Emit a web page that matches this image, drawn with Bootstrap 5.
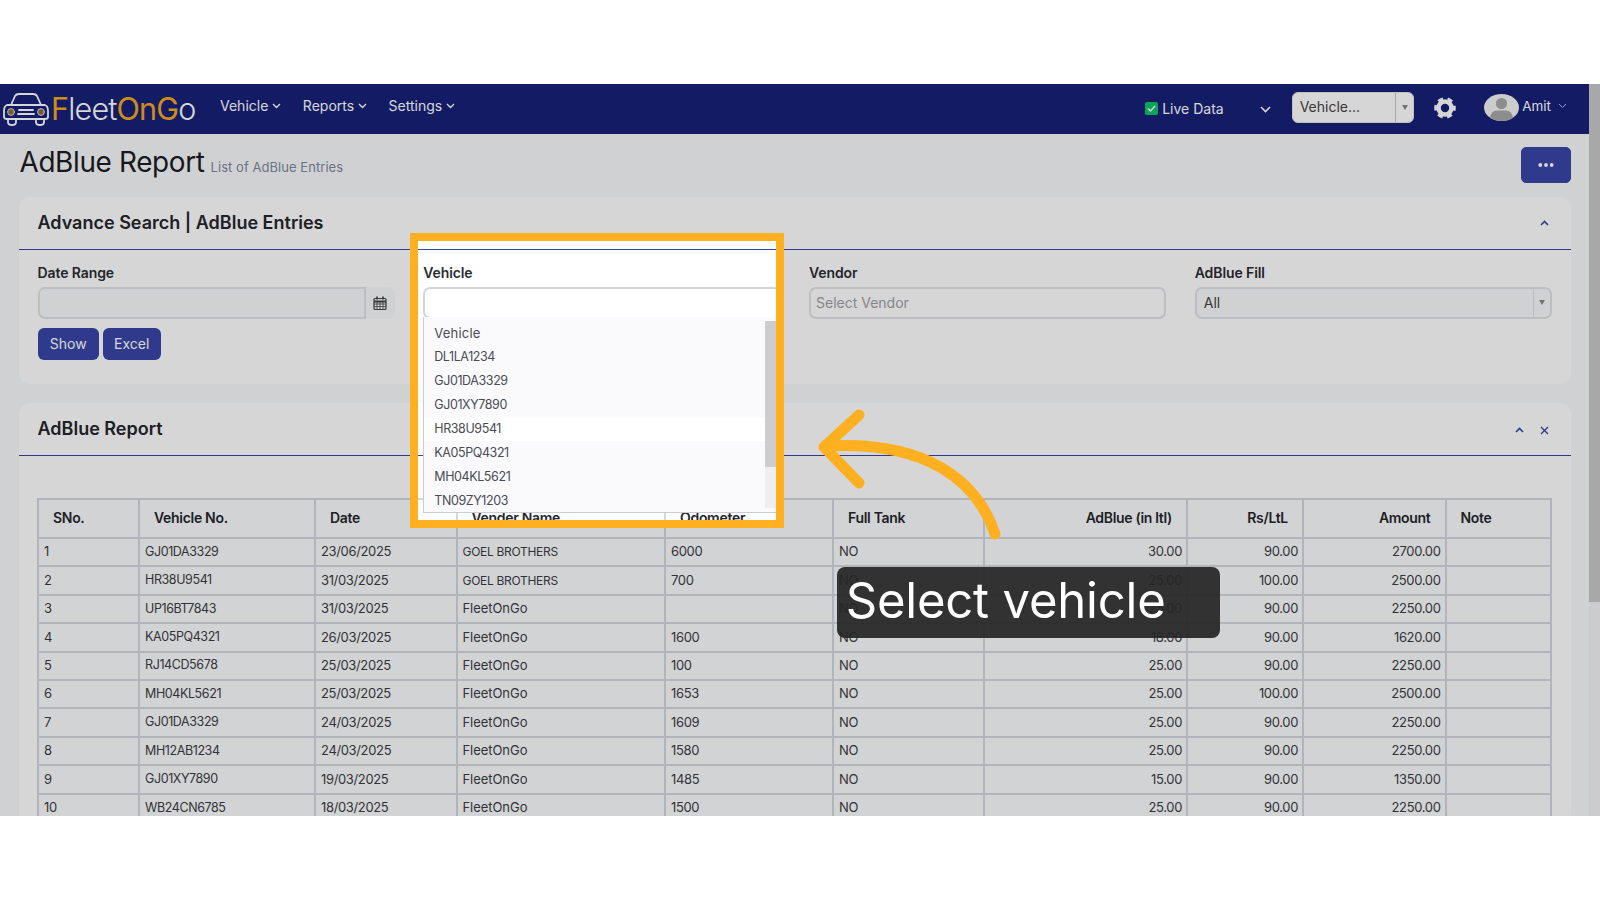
<!DOCTYPE html>
<html lang="en">
<head>
<meta charset="utf-8">
<title>AdBlue Report</title>
<link href="https://cdn.jsdelivr.net/npm/bootstrap@5.3.0/dist/css/bootstrap.min.css" rel="stylesheet">
<style>
html,body{background:#fff;overflow:hidden}
body{font-family:Inter,"Open Sans",sans-serif;color:#33343c;font-size:13px}
.gap-top{height:84px}
.stage{height:732px;overflow:hidden;position:relative;display:flex;background:#f8f9fc}
.app{width:1589px;flex:none}
.side-scroll{width:11px;flex:none;background:#f4f4f6}
.side-thumb{height:518px;background:#c9c9c9}
.top-nav{height:50px;background:#182179;color:#fff;padding:0}
.logo-wrap{margin-left:3px;width:198px;gap:2px}
.logo-text{font-size:30.5px;font-weight:300;letter-spacing:-.8px;line-height:1;color:#fff}
.logo-text b{font-weight:400;color:#f5a81c}
.menu-links{margin-left:19px;gap:21.5px;margin-bottom:7px;font-size:14px}
.menu-links span{display:inline-flex;align-items:center;gap:4px}
.live-box{margin-left:auto;font-size:14px;gap:4px;margin-bottom:1px}
.live-tick{width:13px;height:13px;background:#10c469;border-radius:2px;display:flex}
.live-chev{margin-left:36px;margin-right:21px}
.veh-pick{width:122.5px;height:31.5px;background:#fff;color:#444;border-radius:6px;font-size:14px;margin-bottom:3px;border:1px solid #e6e6e6}
.veh-pick .pick-text{flex:1;padding-left:7px;padding-bottom:3px}
.pick-arrow{width:18px;align-self:stretch;border-left:1px solid #c9c9c9;display:flex;align-items:center;justify-content:center}
.caret-down{width:0;height:0;border-left:3.5px solid transparent;border-right:3.5px solid transparent;border-top:5px solid #888}
.gear-ico{margin-left:20px;margin-bottom:3px}
.avatar-ico{margin-left:28px;margin-bottom:3px}
.user-name{margin-left:3px;font-size:13.5px;margin-bottom:6px}
.user-chev{margin-left:7px;margin-right:22px;margin-bottom:6px}
.title-row{height:63px;padding:12.7px 18px 0 19.5px}
.page-name{font-size:27.9px;font-weight:400;color:#1c1d24;margin:-3px 0 0;line-height:36px;letter-spacing:-.35px}
.page-sub{font-size:13px;color:#7f8aa0;margin-left:6px;letter-spacing:.05px}
.action-btn{width:50px;height:36px;background:#3846a7;border:1px solid #3846a7;border-radius:5px;padding:0;display:flex;align-items:center;justify-content:center}
.panel{margin:0 18px 19px 19px;border:0;border-radius:11px;background:#fff;--bs-card-border-width:0}
.panel-head{height:52.7px;padding:0 22.5px 0 18.5px;background:transparent;border-bottom:1px solid #3846a7;border-radius:11px 11px 0 0!important;display:flex;align-items:center;justify-content:space-between}
.panel-title{font-size:18px;font-weight:600;color:#25262d;margin:0}
.panel-tools{gap:15.5px;padding-top:2px}
.search-body{padding:12px 19px 24px 18.5px;height:134.5px}
.search-row{--bs-gutter-x:28.5px}
.field-label{font-size:14px;font-weight:600;color:#2b2c33;line-height:21px;margin-bottom:4px;display:block;letter-spacing:-.1px}
.field-box{height:32px;border:2px solid #e2e3e8;border-radius:7px;background:#fff;font-size:14px;padding:0 5px;color:#444;box-shadow:none}
.field-box::placeholder{color:#a0a0a6}
.veh-input{border-color:#d4d4d6}
.date-input{background:#f8f9fc;border-radius:7px 0 0 7px}
.date-addon{width:29px;flex:none;height:32px;background:#f8f9fc;border-radius:0 7px 7px 0;display:flex;align-items:center;justify-content:center}
.fill-box{background:#f8f9fc;padding:0 0 0 7px;display:flex;align-items:center}
.fill-box .grow-text{flex:1}
.fill-box .pick-arrow{width:17px;border-left-color:#dfe1e6}
.btn-line{margin-top:9.5px}
.blue-btn{height:32px;background:#3846a7;color:#fff;border:0;border-radius:6px;font-size:14px;padding:0;line-height:32px}
.w-show{width:61.5px}
.w-excel{width:58.5px;margin-left:3.5px}
.veh-field{position:relative}
.veh-menu{position:absolute;left:14.25px;top:55.5px;width:357px;height:196px;background:#fafafc;border-left:1px solid #ccc;border-bottom:1px solid #ccc;display:flex;z-index:5;padding:3.5px 0 0}
.veh-list{flex:1;margin:0;padding:0;list-style:none;overflow:hidden}
.veh-list li{height:24px;line-height:24px;padding-left:10px;font-size:12.5px;color:#4a4b52;letter-spacing:-.4px}
.veh-list li:first-child{letter-spacing:.2px;font-size:13px}
.veh-list li.now{background:#fff}
.veh-track{width:15px;flex:none;height:187.5px;background:#efefef}
.veh-thumb{height:146px;background:#cdcdcd}
.table-wrap{padding:42px 18px 0}
.fuel-table{table-layout:fixed;width:1513px;margin:0;border-collapse:collapse;--bs-table-bg:#fbfcfd;--bs-table-color:#3b3c44;--bs-border-color:#d5d7e0}
.fuel-table>:not(caption)>*>*{padding:0 4px 0 5px;border:2px solid #d5d7e0;font-size:13px;vertical-align:middle;letter-spacing:-.35px;box-shadow:none}
.fuel-table thead tr{height:39px}
.fuel-table tbody tr{height:28.43px}
.fuel-table>thead>tr>th{padding:0 14px 2px 14px;font-size:14px;font-weight:600;color:#26272e;letter-spacing:-.3px}
.fuel-table>tbody>tr>td:nth-child(2){font-size:12.5px;letter-spacing:-.4px}
.fuel-table>tbody>tr>td.vend-up{font-size:12px;letter-spacing:-.3px}
.fuel-table>tbody>tr>td.name-cell{letter-spacing:-.05px}
.c1{width:101px}.c2{width:176px}.c3{width:141.5px}.c4{width:208.5px}.c5{width:168px}.c6{width:151px}.c7{width:203px}.c8{width:116px}.c9{width:142.5px}.c10{width:105.5px}
.spotlight{position:absolute;left:409.5px;top:149.3px;width:374px;height:295px;border:8px solid #ffb020;box-shadow:0 0 0 2000px rgba(0,0,0,.16);z-index:10;pointer-events:none}
.hint-arrow{position:absolute;left:800px;top:316px;z-index:11}
.callout{position:absolute;left:836.7px;top:482.7px;width:383.3px;height:71.6px;border-radius:8px;background:rgba(38,38,38,.93);color:#fff;font-size:49px;font-weight:400;line-height:67px;padding-left:9px;z-index:11;letter-spacing:-.2px}
</style>
</head>
<body>
<div class="gap-top"></div>
<div class="stage">
  <div class="app">
    <nav class="navbar top-nav d-flex flex-nowrap align-items-center">
      <div class="logo-wrap d-flex align-items-center">
        <svg width="46" height="34" viewBox="0 0 46 34" fill="none" stroke="#fff" stroke-width="1.8" stroke-linecap="round" stroke-linejoin="round">
          <path d="M8 13 L12 4 Q13 2 16 2 H30 Q33 2 34 4 L38 13"/>
          <path d="M4 13 H42 Q45 14 45 19 V25 Q45 27 42 27 H4 Q1 27 1 25 V19 Q1 14 4 13Z"/>
          <path d="M5 27 V30 Q5 33 9 33 Q13 33 13 30 V27 M33 27 V30 Q33 33 37 33 Q41 33 41 30 V27"/>
          <path d="M16 18 H30 M15 22 H31"/>
          <circle cx="8" cy="20" r="3.4" fill="#8a6a3f" stroke="#ddd" stroke-width="1"/>
          <circle cx="38" cy="20" r="3.4" fill="#8a6a3f" stroke="#ddd" stroke-width="1"/>
        </svg>
        <span class="logo-text"><b>F</b>leet<b>On</b><b>G</b>o</span>
      </div>
      <div class="menu-links d-flex">
        <span>Vehicle <svg width="9" height="6" viewBox="0 0 9 6" fill="none" stroke="#fff" stroke-width="1.4"><path d="M1 1l3.5 3.5L8 1"/></svg></span>
        <span>Reports <svg width="9" height="6" viewBox="0 0 9 6" fill="none" stroke="#fff" stroke-width="1.4"><path d="M1 1l3.5 3.5L8 1"/></svg></span>
        <span>Settings <svg width="9" height="6" viewBox="0 0 9 6" fill="none" stroke="#fff" stroke-width="1.4"><path d="M1 1l3.5 3.5L8 1"/></svg></span>
      </div>
      <div class="live-box d-flex align-items-center">
        <span class="live-tick"><svg width="13" height="13" viewBox="0 0 13 13" fill="none" stroke="#fff" stroke-width="1.5"><path d="M3 6.5l2.5 2.5L10 4"/></svg></span>
        <span>Live Data</span>
      </div>
      <svg class="live-chev" width="11" height="7" viewBox="0 0 11 7" fill="none" stroke="#fff" stroke-width="1.6"><path d="M1 1l4.5 4.5L10 1"/></svg>
      <div class="veh-pick d-flex align-items-center">
        <span class="pick-text">Vehicle...</span>
        <span class="pick-arrow"><span class="caret-down"></span></span>
      </div>
      <svg class="gear-ico" width="22" height="22" viewBox="-11 -11 22 22" fill="none" stroke="#fff"><circle r="6.5" stroke-width="4.6"/><circle r="9.3" stroke-width="3" stroke-dasharray="5.2 4.54" stroke-dashoffset="2.6"/></svg>
      <svg class="avatar-ico" width="35" height="27" viewBox="0 0 35 27"><ellipse cx="17.5" cy="13.5" rx="17.5" ry="13.5" fill="#f4f4f4"/><ellipse cx="17.5" cy="9.5" rx="5.6" ry="5.6" fill="#a8a8a8"/><path d="M6 24 Q7 16.5 13 16.5 H22 Q28 16.5 29 24 Q24 27 17.5 27 Q11 27 6 24Z" fill="#a8a8a8"/></svg>
      <span class="user-name">Amit</span>
      <svg class="user-chev" width="9" height="6" viewBox="0 0 9 6" fill="none" stroke="#b9bccf" stroke-width="1"><path d="M1 1l3.5 3.5L8 1"/></svg>
    </nav>

    <div class="title-row d-flex justify-content-between align-items-start">
      <h1 class="page-name">AdBlue Report<span class="page-sub">List of AdBlue Entries</span></h1>
      <button class="action-btn" type="button" aria-label="More"><svg width="16" height="4" viewBox="0 0 16 4" fill="#fff"><circle cx="2.3" cy="2" r="1.9"/><circle cx="8" cy="2" r="1.9"/><circle cx="13.7" cy="2" r="1.9"/></svg></button>
    </div>

    <div class="card panel">
      <div class="card-header panel-head">
        <h2 class="panel-title">Advance Search | AdBlue Entries</h2>
        <svg width="9" height="6" viewBox="0 0 9 6" fill="none" stroke="#3846a7" stroke-width="1.6"><path d="M1 5l3.5-3.5L8 5"/></svg>
      </div>
      <div class="card-body search-body">
        <div class="row search-row">
          <div class="col-3">
            <label class="field-label">Date Range</label>
            <div class="d-flex">
              <input class="form-control field-box date-input" type="text" aria-label="Date Range">
              <span class="date-addon"><svg width="14" height="14" viewBox="0 0 14 14" fill="none" stroke="#444"><rect x="1" y="2.5" width="12" height="11" rx="1" stroke-width="1.2"/><path d="M1 5.5h12" stroke-width="2"/><path d="M4 .5v3M10 .5v3" stroke-width="1.6"/><path d="M1 8h12M1 10.6h12M4 6v7M7 6v7M10 6v7" stroke-width=".8"/></svg></span>
            </div>
            <div class="btn-line d-flex">
              <button class="btn blue-btn w-show" type="button">Show</button>
              <button class="btn blue-btn w-excel" type="button">Excel</button>
            </div>
          </div>
          <div class="col-3 veh-field">
            <label class="field-label">Vehicle</label>
            <input class="form-control field-box veh-input" type="text" aria-label="Vehicle">
            <div class="veh-menu">
              <ul class="veh-list">
                <li>Vehicle</li><li>DL1LA1234</li><li>GJ01DA3329</li><li>GJ01XY7890</li><li class="now">HR38U9541</li><li>KA05PQ4321</li><li>MH04KL5621</li><li>TN09ZY1203</li>
              </ul>
              <div class="veh-track"><div class="veh-thumb"></div></div>
            </div>
          </div>
          <div class="col-3">
            <label class="field-label">Vendor</label>
            <input class="form-control field-box" type="text" placeholder="Select Vendor">
          </div>
          <div class="col-3">
            <label class="field-label">AdBlue Fill</label>
            <div class="field-box fill-box"><span class="grow-text">All</span><span class="pick-arrow"><span class="caret-down"></span></span></div>
          </div>
        </div>
      </div>
    </div>

    <div class="card panel">
      <div class="card-header panel-head">
        <h2 class="panel-title">AdBlue Report</h2>
        <div class="panel-tools d-flex align-items-center">
          <svg width="9" height="6" viewBox="0 0 9 6" fill="none" stroke="#3846a7" stroke-width="1.6"><path d="M1 5l3.5-3.5L8 5"/></svg>
          <svg width="9" height="9" viewBox="0 0 9 9" fill="none" stroke="#3846a7" stroke-width="1.4"><path d="M1 1l7 7M8 1l-7 7"/></svg>
        </div>
      </div>
      <div class="table-wrap">
        <table class="table table-bordered fuel-table">
          <colgroup><col class="c1"><col class="c2"><col class="c3"><col class="c4"><col class="c5"><col class="c6"><col class="c7"><col class="c8"><col class="c9"><col class="c10"></colgroup>
          <thead><tr><th>SNo.</th><th>Vehicle No.</th><th>Date</th><th>Vender Name</th><th>Odometer</th><th>Full Tank</th><th class="text-end">AdBlue (in ltl)</th><th class="text-end">Rs/LtL</th><th class="text-end">Amount</th><th>Note</th></tr></thead>
          <tbody>
            <tr><td>1</td><td>GJ01DA3329</td><td>23/06/2025</td><td class="vend-up">GOEL BROTHERS</td><td>6000</td><td>NO</td><td class="text-end">30.00</td><td class="text-end">90.00</td><td class="text-end">2700.00</td><td></td></tr>
            <tr><td>2</td><td>HR38U9541</td><td>31/03/2025</td><td class="vend-up">GOEL BROTHERS</td><td>700</td><td>NO</td><td class="text-end">25.00</td><td class="text-end">100.00</td><td class="text-end">2500.00</td><td></td></tr>
            <tr><td>3</td><td>UP16BT7843</td><td>31/03/2025</td><td class="name-cell">FleetOnGo</td><td></td><td>NO</td><td class="text-end">25.00</td><td class="text-end">90.00</td><td class="text-end">2250.00</td><td></td></tr>
            <tr><td>4</td><td>KA05PQ4321</td><td>26/03/2025</td><td class="name-cell">FleetOnGo</td><td>1600</td><td>NO</td><td class="text-end">18.00</td><td class="text-end">90.00</td><td class="text-end">1620.00</td><td></td></tr>
            <tr><td>5</td><td>RJ14CD5678</td><td>25/03/2025</td><td class="name-cell">FleetOnGo</td><td>100</td><td>NO</td><td class="text-end">25.00</td><td class="text-end">90.00</td><td class="text-end">2250.00</td><td></td></tr>
            <tr><td>6</td><td>MH04KL5621</td><td>25/03/2025</td><td class="name-cell">FleetOnGo</td><td>1653</td><td>NO</td><td class="text-end">25.00</td><td class="text-end">100.00</td><td class="text-end">2500.00</td><td></td></tr>
            <tr><td>7</td><td>GJ01DA3329</td><td>24/03/2025</td><td class="name-cell">FleetOnGo</td><td>1609</td><td>NO</td><td class="text-end">25.00</td><td class="text-end">90.00</td><td class="text-end">2250.00</td><td></td></tr>
            <tr><td>8</td><td>MH12AB1234</td><td>24/03/2025</td><td class="name-cell">FleetOnGo</td><td>1580</td><td>NO</td><td class="text-end">25.00</td><td class="text-end">90.00</td><td class="text-end">2250.00</td><td></td></tr>
            <tr><td>9</td><td>GJ01XY7890</td><td>19/03/2025</td><td class="name-cell">FleetOnGo</td><td>1485</td><td>NO</td><td class="text-end">15.00</td><td class="text-end">90.00</td><td class="text-end">1350.00</td><td></td></tr>
            <tr><td>10</td><td>WB24CN6785</td><td>18/03/2025</td><td class="name-cell">FleetOnGo</td><td>1500</td><td>NO</td><td class="text-end">25.00</td><td class="text-end">90.00</td><td class="text-end">2250.00</td><td></td></tr>
          </tbody>
        </table>
      </div>
    </div>
  </div>
  <div class="side-scroll"><div class="side-thumb"></div></div>

  <div class="spotlight"></div>
  <svg class="hint-arrow" width="210" height="150" viewBox="800 400 210 150" fill="none" stroke="#ffb020" stroke-width="11" stroke-linecap="round" stroke-linejoin="round">
    <path d="M995 534 C977 480 925 440 826 446"/>
    <path d="M859 415 L824 447 L859 483"/>
  </svg>
  <div class="callout">Select vehicle</div>
</div>
<script src="https://cdn.jsdelivr.net/npm/bootstrap@5.3.0/dist/js/bootstrap.bundle.min.js"></script>
</body>
</html>
